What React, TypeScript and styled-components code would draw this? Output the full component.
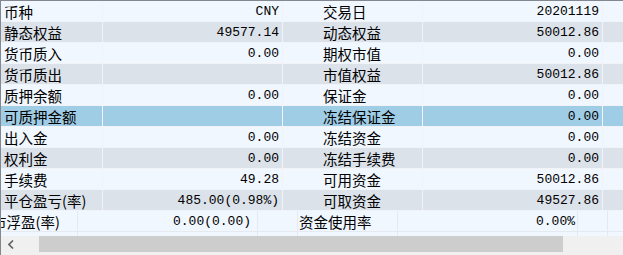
import React from "react";
import styled, { createGlobalStyle } from "styled-components";

const GlobalStyle = createGlobalStyle`
  html, body {
    margin: 0;
    padding: 0;
    background: #f0f0f0;
  }
`;

const LINE = "#f1f3f6";

const Frame = styled.div`
  width: 623px;
  height: 255px;
  box-sizing: border-box;
  border-top: 1px solid #828790;
  border-left: 1px solid #828790;
  background: #f0f7ff;
  overflow: hidden;
  display: flex;
  flex-direction: column;
`;

const Table = styled.div`
  display: flex;
  flex-direction: column;
`;

type Tone = "light" | "dark" | "selected";

const toneBg: Record<Tone, string> = {
  light: "#f0f7ff",
  dark: "#dce2ea",
  selected: "#a0cde6",
};

const Row = styled.div<{ $tone: Tone }>`
  display: grid;
  grid-template-columns: 102px 180px 37px 103px 180px 1fr;
  height: 21px;
  box-sizing: border-box;
  border-bottom: 1px solid ${LINE};
  background: ${(p) => toneBg[p.$tone]};
`;

const Cell = styled.div<{ $line?: boolean }>`
  box-sizing: border-box;
  height: 20px;
  border-right: ${(p) => (p.$line ? `1px solid ${LINE}` : "none")};
  display: flex;
  align-items: center;
  overflow: hidden;
  white-space: nowrap;
`;

const Label = styled(Cell)`
  padding-left: 3px;
  font-family: "Noto Sans CJK SC", sans-serif;
  font-size: 14.5px;
  color: #000;
`;

const Value = styled(Cell)<{ $pad?: number }>`
  justify-content: flex-end;
  padding-right: ${(p) => p.$pad ?? 3}px;
  font-family: "Liberation Mono", monospace;
  font-size: 13px;
  color: #000;
`;

const Lower = styled.div`
  overflow: hidden;
  height: 25px;
`;

const LowerInner = styled.div`
  margin-left: -12px;
  width: 700px;
`;

const LowerRow = styled.div<{ $h: number; $border?: boolean }>`
  display: grid;
  grid-template-columns: 89px 180px 40px 100px 180px 30px 1fr;
  height: ${(p) => p.$h}px;
  box-sizing: border-box;
  border-bottom: ${(p) => (p.$border ? "1px solid #e6e9ee" : "none")};
  background: #f0f7ff;
`;

const LowerCell = styled(Cell)`
  height: auto;
  border-right: 1px solid #e6e9ee;
`;

const LowerLabel = styled(LowerCell)`
  padding-left: 3px;
  font-family: "Noto Sans CJK SC", sans-serif;
  font-size: 14.5px;
  color: #000;
`;

const LowerValue = styled(LowerCell)<{ $pad: number }>`
  justify-content: flex-end;
  padding-right: ${(p) => p.$pad}px;
  font-family: "Liberation Mono", monospace;
  font-size: 13px;
  color: #000;
`;

const ScrollBar = styled.div`
  display: flex;
  height: 16px;
  background: #f0f0f0;
`;

const ArrowButton = styled.div`
  width: 38px;
  display: flex;
  align-items: center;
  padding-left: 7px;
  box-sizing: border-box;
`;

const Thumb = styled.div`
  width: 524px;
  background: #cdcdcd;
`;

const Track = styled.div`
  flex: 1;
`;

const BottomStrip = styled.div`
  flex: 1;
  background: #f0f0f0;
`;

type Line = {
  l1: string;
  v1: string;
  l2: string;
  v2: string;
  tone: Tone;
};

const rows: Line[] = [
  { l1: "币种", v1: "CNY", l2: "交易日", v2: "20201119", tone: "light" },
  { l1: "静态权益", v1: "49577.14", l2: "动态权益", v2: "50012.86", tone: "dark" },
  { l1: "货币质入", v1: "0.00", l2: "期权市值", v2: "0.00", tone: "light" },
  { l1: "货币质出", v1: "", l2: "市值权益", v2: "50012.86", tone: "dark" },
  { l1: "质押余额", v1: "0.00", l2: "保证金", v2: "0.00", tone: "light" },
  { l1: "可质押金额", v1: "", l2: "冻结保证金", v2: "0.00", tone: "selected" },
  { l1: "出入金", v1: "0.00", l2: "冻结资金", v2: "0.00", tone: "light" },
  { l1: "权利金", v1: "0.00", l2: "冻结手续费", v2: "0.00", tone: "dark" },
  { l1: "手续费", v1: "49.28", l2: "可用资金", v2: "50012.86", tone: "light" },
  { l1: "平仓盈亏(率)", v1: "485.00(0.98%)", l2: "可取资金", v2: "49527.86", tone: "dark" },
];

export default function App() {
  return (
    <>
      <GlobalStyle />
      <Frame>
        <Table>
          {rows.map((r) => (
            <Row key={r.l1} $tone={r.tone}>
              <Label $line>{r.l1}</Label>
              <Value $line>{r.v1}</Value>
              <Cell />
              <Label $line>{r.l2}</Label>
              <Value $line>{r.v2}</Value>
              <Cell />
            </Row>
          ))}
        </Table>
        <Lower>
          <LowerInner>
            <LowerRow $h={21} $border>
              <LowerLabel>市浮盈(率)</LowerLabel>
              <LowerValue $pad={6}>0.00(0.00)</LowerValue>
              <LowerCell />
              <LowerLabel style={{ paddingLeft: 1 }}>资金使用率</LowerLabel>
              <LowerValue $pad={2}>0.00%</LowerValue>
              <LowerCell />
              <LowerCell />
            </LowerRow>
            <LowerRow $h={4}>
              <LowerCell />
              <LowerCell />
              <LowerCell />
              <LowerCell />
              <LowerCell />
              <LowerCell />
              <LowerCell />
            </LowerRow>
          </LowerInner>
        </Lower>
        <ScrollBar>
          <ArrowButton>
            <svg width="6" height="9" viewBox="0 0 6 9">
              <polyline
                points="5,0.5 1,4.5 5,8.5"
                fill="none"
                stroke="#606060"
                strokeWidth="1.6"
              />
            </svg>
          </ArrowButton>
          <Thumb />
          <Track />
        </ScrollBar>
        <BottomStrip />
      </Frame>
    </>
  );
}
